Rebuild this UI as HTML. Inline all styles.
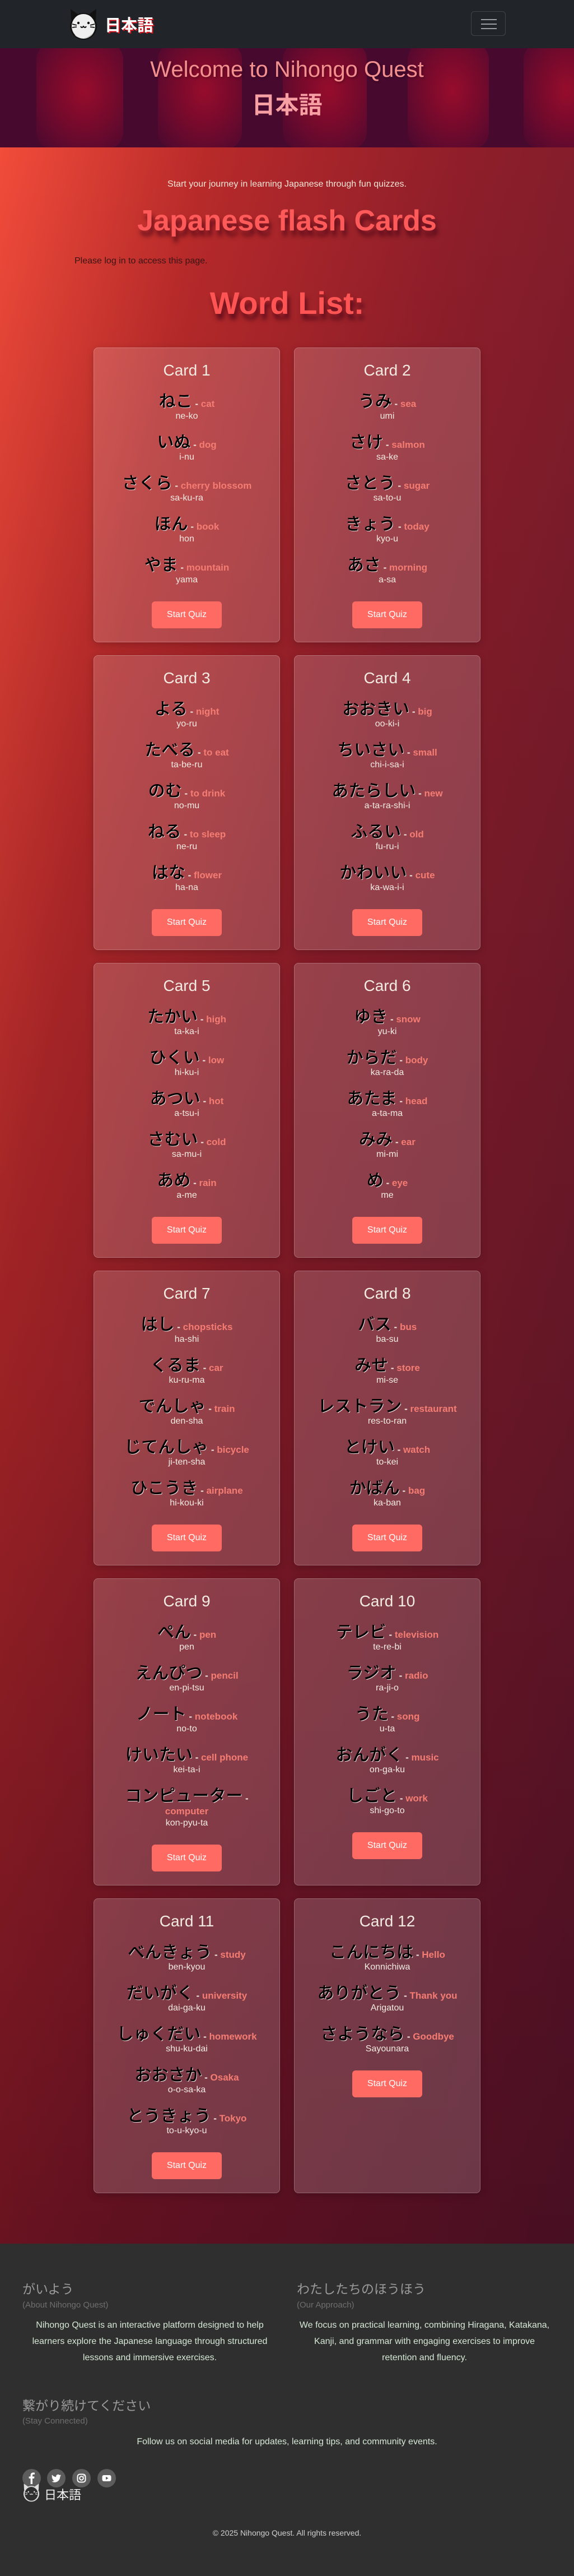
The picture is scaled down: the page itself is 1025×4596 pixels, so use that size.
<!DOCTYPE html>
<html><head><meta charset="utf-8"><style>
*{box-sizing:border-box;margin:0;padding:0}
body{width:1025px;height:4596px;font-family:"Liberation Sans","Noto Sans CJK JP",sans-serif;background:#2f2f2f;position:relative;overflow:hidden}
nav{position:absolute;left:0;top:0;width:1025px;height:86px;background:#212529}
.brand{position:absolute;left:187px;top:22px;font-size:29px;font-weight:bold;color:#fff;text-shadow:2px 2px 0 #d0141e;font-family:"Liberation Sans","Noto Sans CJK JP",sans-serif}
.tog{position:absolute;left:841px;top:20px;width:62px;height:44px;border:1px solid rgba(255,255,255,.15);border-radius:6px}
.tog i{position:absolute;left:17px;width:28px;height:2px;background:#9a9da0}
.hero{position:absolute;left:0;top:86px;width:1025px;height:177px;background:#480a2e;overflow:hidden}
.lan{position:absolute;top:-10px;height:190px;border-radius:30px;background:radial-gradient(ellipse at 55% 45%,#e0102a 0%,#a80c2a 40%,#6a0a30 80%,rgba(72,10,46,0) 100%);opacity:.8}
.hero h1{position:absolute;left:0;width:1025px;top:16px;text-align:center;font-weight:normal;font-size:40px;color:#f49090;text-shadow:2px 2px 4px rgba(0,0,0,.3)}
.hero h2{position:absolute;left:0;width:1025px;top:68px;text-align:center;font-size:42px;font-weight:bold;color:#f7a0a4;font-family:"Liberation Sans","Noto Sans CJK JP",sans-serif}
main{position:absolute;left:0;top:263px;width:1025px;height:3740px;background:linear-gradient(to bottom,rgba(0,0,0,0) 0%,rgba(40,0,15,.2) 60%,rgba(40,0,20,.45) 100%),linear-gradient(100deg,#f24c3a 0%,#b82a2a 22%,#8e1e2a 50%,#741c2c 80%,#621a2e 100%)}
.intro{position:absolute;left:0;width:1025px;top:57px;text-align:center;font-size:16px;color:#f3e6d6}
.t1{position:absolute;left:0;width:1025px;top:101px;text-align:center;font-size:52px;font-weight:bold;color:#ff5a5a;text-shadow:4px 10px 8px rgba(60,0,20,.65)}
.login{position:absolute;left:133px;top:194px;font-size:16px;color:#3a1414}
.t2{position:absolute;left:0;width:1025px;top:245px;text-align:center;font-size:56px;font-weight:bold;color:#ff5454;text-shadow:4px 10px 8px rgba(60,0,20,.65)}
.grid{position:absolute;left:167px;top:357px;width:691px;display:grid;grid-template-columns:333px 333px;column-gap:25px;row-gap:23px}
.card{background:rgba(255,255,255,.17);border:1px solid rgba(255,255,255,.22);border-radius:8px;box-shadow:0 4px 14px rgba(0,0,0,.18);padding:20px 14px 24px;text-align:center}
.card h3{font-weight:normal;font-size:28px;line-height:40px;color:#f2ebe2;margin-bottom:12px}
.w{margin-bottom:13px}
.jp{line-height:40px;height:40px;white-space:nowrap}
.jp b{font-weight:500;font-size:30px;color:#000;text-shadow:1px 1px 0 #e8d8d8;font-family:"Noto Sans CJK JP",sans-serif}
.jp s{text-decoration:none;font-size:17px;color:#f2e8e0;font-weight:bold}
.jp em{font-style:normal;font-size:17px;font-weight:bold;color:#f57c72}
.en2{font-size:17px;font-weight:bold;color:#f57c72;line-height:22px}
.ro{font-size:16px;line-height:20px;color:#f2ebe2}
.btn{display:inline-block;margin-top:15px;width:125px;height:48px;line-height:48px;border-radius:6px;background:#ff6b63;color:#fff;font-size:16px}
footer{position:absolute;left:0;top:4003px;width:1025px;height:593px;background:#2f2f2f;color:#ddd}
.fh{position:absolute;font-size:23px;color:#9a9a9a;font-family:"Liberation Sans","Noto Sans CJK JP",sans-serif}
.fs{position:absolute;font-size:15px;color:#6e6e6e}
.fp{position:absolute;font-size:16px;line-height:29px;color:#d6e8d6;text-align:center}
.soc{position:absolute;top:4405px;width:33px;height:33px;border-radius:50%;background:#5c5c5c}
</style></head><body>
<nav>
<svg style="position:absolute;left:123px;top:14px" width="52" height="58" viewBox="0 0 52 58">
<path d="M4 22 L3 2 L17 12 Z M48 22 L49 2 L35 12 Z" fill="#111"/>
<ellipse cx="26" cy="33" rx="24" ry="24" fill="#111"/>
<ellipse cx="26" cy="33" rx="21" ry="22" fill="#eee"/>
<path d="M10 48 Q26 62 44 44 Q40 54 26 54 Q14 54 10 48Z" fill="#bbb"/>
<circle cx="17" cy="27" r="2.2" fill="#111"/><circle cx="35" cy="27" r="2.2" fill="#111"/>
<path d="M21 33 Q23 37 26 33 Q29 37 31 33" stroke="#111" stroke-width="2" fill="none"/>
<path d="M6 29 L14 31 M6 35 L14 34 M46 29 L38 31 M46 35 L38 34" stroke="#111" stroke-width="1.8"/>
</svg>
<div class="brand">日本語</div>
<div class="tog"><i style="top:13px"></i><i style="top:21px"></i><i style="top:29px"></i></div>
</nav>
<div class="hero">
<div class="lan" style="left:65px;width:155px"></div>
<div class="lan" style="left:282px;width:150px"></div>
<div class="lan" style="left:505px;width:150px"></div>
<div class="lan" style="left:728px;width:145px"></div>
<div class="lan" style="left:935px;width:140px"></div>
<div style="position:absolute;left:0;top:0;width:1025px;height:177px;background:rgba(72,10,46,.35)"></div>
<h1>Welcome to Nihongo Quest</h1>
<h2>日本語</h2>
</div>
<main>
<div class="intro">Start your journey in learning Japanese through fun quizzes.</div>
<div class="t1">Japanese flash Cards</div>
<div class="login">Please log in to access this page.</div>
<div class="t2">Word List:</div>
<div class="grid">
<div class="card"><h3>Card 1</h3>
<div class="w"><div class="jp"><b>ねこ</b><s> - </s><em>cat</em></div><div class="ro">ne-ko</div></div>
<div class="w"><div class="jp"><b>いぬ</b><s> - </s><em>dog</em></div><div class="ro">i-nu</div></div>
<div class="w"><div class="jp"><b>さくら</b><s> - </s><em>cherry blossom</em></div><div class="ro">sa-ku-ra</div></div>
<div class="w"><div class="jp"><b>ほん</b><s> - </s><em>book</em></div><div class="ro">hon</div></div>
<div class="w"><div class="jp"><b>やま</b><s> - </s><em>mountain</em></div><div class="ro">yama</div></div>
<div class="btn">Start Quiz</div></div>
<div class="card"><h3>Card 2</h3>
<div class="w"><div class="jp"><b>うみ</b><s> - </s><em>sea</em></div><div class="ro">umi</div></div>
<div class="w"><div class="jp"><b>さけ</b><s> - </s><em>salmon</em></div><div class="ro">sa-ke</div></div>
<div class="w"><div class="jp"><b>さとう</b><s> - </s><em>sugar</em></div><div class="ro">sa-to-u</div></div>
<div class="w"><div class="jp"><b>きょう</b><s> - </s><em>today</em></div><div class="ro">kyo-u</div></div>
<div class="w"><div class="jp"><b>あさ</b><s> - </s><em>morning</em></div><div class="ro">a-sa</div></div>
<div class="btn">Start Quiz</div></div>
<div class="card"><h3>Card 3</h3>
<div class="w"><div class="jp"><b>よる</b><s> - </s><em>night</em></div><div class="ro">yo-ru</div></div>
<div class="w"><div class="jp"><b>たべる</b><s> - </s><em>to eat</em></div><div class="ro">ta-be-ru</div></div>
<div class="w"><div class="jp"><b>のむ</b><s> - </s><em>to drink</em></div><div class="ro">no-mu</div></div>
<div class="w"><div class="jp"><b>ねる</b><s> - </s><em>to sleep</em></div><div class="ro">ne-ru</div></div>
<div class="w"><div class="jp"><b>はな</b><s> - </s><em>flower</em></div><div class="ro">ha-na</div></div>
<div class="btn">Start Quiz</div></div>
<div class="card"><h3>Card 4</h3>
<div class="w"><div class="jp"><b>おおきい</b><s> - </s><em>big</em></div><div class="ro">oo-ki-i</div></div>
<div class="w"><div class="jp"><b>ちいさい</b><s> - </s><em>small</em></div><div class="ro">chi-i-sa-i</div></div>
<div class="w"><div class="jp"><b>あたらしい</b><s> - </s><em>new</em></div><div class="ro">a-ta-ra-shi-i</div></div>
<div class="w"><div class="jp"><b>ふるい</b><s> - </s><em>old</em></div><div class="ro">fu-ru-i</div></div>
<div class="w"><div class="jp"><b>かわいい</b><s> - </s><em>cute</em></div><div class="ro">ka-wa-i-i</div></div>
<div class="btn">Start Quiz</div></div>
<div class="card"><h3>Card 5</h3>
<div class="w"><div class="jp"><b>たかい</b><s> - </s><em>high</em></div><div class="ro">ta-ka-i</div></div>
<div class="w"><div class="jp"><b>ひくい</b><s> - </s><em>low</em></div><div class="ro">hi-ku-i</div></div>
<div class="w"><div class="jp"><b>あつい</b><s> - </s><em>hot</em></div><div class="ro">a-tsu-i</div></div>
<div class="w"><div class="jp"><b>さむい</b><s> - </s><em>cold</em></div><div class="ro">sa-mu-i</div></div>
<div class="w"><div class="jp"><b>あめ</b><s> - </s><em>rain</em></div><div class="ro">a-me</div></div>
<div class="btn">Start Quiz</div></div>
<div class="card"><h3>Card 6</h3>
<div class="w"><div class="jp"><b>ゆき</b><s> - </s><em>snow</em></div><div class="ro">yu-ki</div></div>
<div class="w"><div class="jp"><b>からだ</b><s> - </s><em>body</em></div><div class="ro">ka-ra-da</div></div>
<div class="w"><div class="jp"><b>あたま</b><s> - </s><em>head</em></div><div class="ro">a-ta-ma</div></div>
<div class="w"><div class="jp"><b>みみ</b><s> - </s><em>ear</em></div><div class="ro">mi-mi</div></div>
<div class="w"><div class="jp"><b>め</b><s> - </s><em>eye</em></div><div class="ro">me</div></div>
<div class="btn">Start Quiz</div></div>
<div class="card"><h3>Card 7</h3>
<div class="w"><div class="jp"><b>はし</b><s> - </s><em>chopsticks</em></div><div class="ro">ha-shi</div></div>
<div class="w"><div class="jp"><b>くるま</b><s> - </s><em>car</em></div><div class="ro">ku-ru-ma</div></div>
<div class="w"><div class="jp"><b>でんしゃ</b><s> - </s><em>train</em></div><div class="ro">den-sha</div></div>
<div class="w"><div class="jp"><b>じてんしゃ</b><s> - </s><em>bicycle</em></div><div class="ro">ji-ten-sha</div></div>
<div class="w"><div class="jp"><b>ひこうき</b><s> - </s><em>airplane</em></div><div class="ro">hi-kou-ki</div></div>
<div class="btn">Start Quiz</div></div>
<div class="card"><h3>Card 8</h3>
<div class="w"><div class="jp"><b>バス</b><s> - </s><em>bus</em></div><div class="ro">ba-su</div></div>
<div class="w"><div class="jp"><b>みせ</b><s> - </s><em>store</em></div><div class="ro">mi-se</div></div>
<div class="w"><div class="jp"><b>レストラン</b><s> - </s><em>restaurant</em></div><div class="ro">res-to-ran</div></div>
<div class="w"><div class="jp"><b>とけい</b><s> - </s><em>watch</em></div><div class="ro">to-kei</div></div>
<div class="w"><div class="jp"><b>かばん</b><s> - </s><em>bag</em></div><div class="ro">ka-ban</div></div>
<div class="btn">Start Quiz</div></div>
<div class="card"><h3>Card 9</h3>
<div class="w"><div class="jp"><b>ぺん</b><s> - </s><em>pen</em></div><div class="ro">pen</div></div>
<div class="w"><div class="jp"><b>えんぴつ</b><s> - </s><em>pencil</em></div><div class="ro">en-pi-tsu</div></div>
<div class="w"><div class="jp"><b>ノート</b><s> - </s><em>notebook</em></div><div class="ro">no-to</div></div>
<div class="w"><div class="jp"><b>けいたい</b><s> - </s><em>cell phone</em></div><div class="ro">kei-ta-i</div></div>
<div class="w"><div class="jp"><b>コンピューター</b><s> - </s></div><div class="en2">computer</div><div class="ro">kon-pyu-ta</div></div>
<div class="btn">Start Quiz</div></div>
<div class="card"><h3>Card 10</h3>
<div class="w"><div class="jp"><b>テレビ</b><s> - </s><em>television</em></div><div class="ro">te-re-bi</div></div>
<div class="w"><div class="jp"><b>ラジオ</b><s> - </s><em>radio</em></div><div class="ro">ra-ji-o</div></div>
<div class="w"><div class="jp"><b>うた</b><s> - </s><em>song</em></div><div class="ro">u-ta</div></div>
<div class="w"><div class="jp"><b>おんがく</b><s> - </s><em>music</em></div><div class="ro">on-ga-ku</div></div>
<div class="w"><div class="jp"><b>しごと</b><s> - </s><em>work</em></div><div class="ro">shi-go-to</div></div>
<div class="btn">Start Quiz</div></div>
<div class="card"><h3>Card 11</h3>
<div class="w"><div class="jp"><b>べんきょう</b><s> - </s><em>study</em></div><div class="ro">ben-kyou</div></div>
<div class="w"><div class="jp"><b>だいがく</b><s> - </s><em>university</em></div><div class="ro">dai-ga-ku</div></div>
<div class="w"><div class="jp"><b>しゅくだい</b><s> - </s><em>homework</em></div><div class="ro">shu-ku-dai</div></div>
<div class="w"><div class="jp"><b>おおさか</b><s> - </s><em>Osaka</em></div><div class="ro">o-o-sa-ka</div></div>
<div class="w"><div class="jp"><b>とうきょう</b><s> - </s><em>Tokyo</em></div><div class="ro">to-u-kyo-u</div></div>
<div class="btn">Start Quiz</div></div>
<div class="card"><h3>Card 12</h3>
<div class="w"><div class="jp"><b>こんにちは</b><s> - </s><em>Hello</em></div><div class="ro">Konnichiwa</div></div>
<div class="w"><div class="jp"><b>ありがとう</b><s> - </s><em>Thank you</em></div><div class="ro">Arigatou</div></div>
<div class="w"><div class="jp"><b>さようなら</b><s> - </s><em>Goodbye</em></div><div class="ro">Sayounara</div></div>
<div class="btn">Start Quiz</div></div>
</div>
</main>
<footer>
<div class="fh" style="left:40px;top:62px">がいよう</div>
<div class="fs" style="left:40px;top:101px">(About Nihongo Quest)</div>
<div class="fp" style="left:50px;top:131px;width:435px">Nihongo Quest is an interactive platform designed to help learners explore the Japanese language through structured lessons and immersive exercises.</div>
<div class="fh" style="left:530px;top:62px">わたしたちのほうほう</div>
<div class="fs" style="left:530px;top:101px">(Our Approach)</div>
<div class="fp" style="left:532px;top:131px;width:452px">We focus on practical learning, combining Hiragana, Katakana, Kanji, and grammar with engaging exercises to improve retention and fluency.</div>
<div class="fh" style="left:40px;top:270px">繋がり続けてください</div>
<div class="fs" style="left:40px;top:308px">(Stay Connected)</div>
<div class="fp" style="left:0;top:339px;width:1025px">Follow us on social media for updates, learning tips, and community events.</div>
<div class="fp" style="left:0;top:502px;width:1025px;font-size:14px;color:#cfcfcf">© 2025 Nihongo Quest. All rights reserved.</div>
</footer>
<div class="soc" style="left:40px"><svg width="33" height="33" viewBox="0 0 33 33"><path d="M18 27V17h3l.5-3.5H18v-2c0-1 .3-1.7 1.8-1.7H22V6.7c-.4 0-1.5-.2-2.8-.2-2.8 0-4.6 1.7-4.6 4.7v2.3h-3V17h3v10z" fill="#fff"/></svg></div>
<div class="soc" style="left:84px"><svg width="33" height="33" viewBox="0 0 33 33"><path d="M25 11.5c-.6.3-1.3.5-2 .6.7-.4 1.3-1.1 1.5-1.9-.7.4-1.4.7-2.2.8a3.5 3.5 0 0 0-6 3.2c-2.9-.1-5.5-1.5-7.2-3.7-1 1.6-.5 3.7 1.1 4.7-.6 0-1.1-.2-1.6-.4 0 1.7 1.2 3.1 2.8 3.5-.5.1-1 .2-1.6.1.4 1.4 1.7 2.4 3.3 2.4A7 7 0 0 1 8 22.3 9.9 9.9 0 0 0 23.3 13.5c.7-.5 1.3-1.1 1.7-1.9z" fill="#fff"/></svg></div>
<div class="soc" style="left:129px"><svg width="33" height="33" viewBox="0 0 33 33"><rect x="9.5" y="9.5" width="14" height="14" rx="4" stroke="#fff" stroke-width="2" fill="none"/><circle cx="16.5" cy="16.5" r="3.3" stroke="#fff" stroke-width="2" fill="none"/><circle cx="20.6" cy="12.4" r="1" fill="#fff"/></svg></div>
<div class="soc" style="left:174px"><svg width="33" height="33" viewBox="0 0 33 33"><rect x="8.5" y="11" width="16" height="11" rx="3" fill="#fff"/><path d="M15 13.8v5.4l4.5-2.7z" fill="#5c5c5c"/></svg></div>
<svg style="position:absolute;left:40px;top:4430px" width="32" height="34" viewBox="0 0 52 58">
<path d="M4 22 L3 2 L17 12 Z M48 22 L49 2 L35 12 Z" fill="#ddd"/>
<ellipse cx="26" cy="33" rx="24" ry="24" fill="#ddd"/>
<ellipse cx="26" cy="33" rx="20" ry="21" fill="#2f2f2f"/>
<circle cx="17" cy="27" r="2.2" fill="#ddd"/><circle cx="35" cy="27" r="2.2" fill="#ddd"/>
<path d="M21 33 Q23 37 26 33 Q29 37 31 33" stroke="#ddd" stroke-width="2" fill="none"/>
<path d="M8 29 L14 31 M8 35 L14 34 M44 29 L38 31 M44 35 L38 34" stroke="#ddd" stroke-width="1.8"/>
</svg>
<div style="position:absolute;left:79px;top:4434px;font-size:22px;color:#f0f0f0;font-family:'Liberation Sans','Noto Sans CJK JP',sans-serif">日本語</div>
</body></html>
